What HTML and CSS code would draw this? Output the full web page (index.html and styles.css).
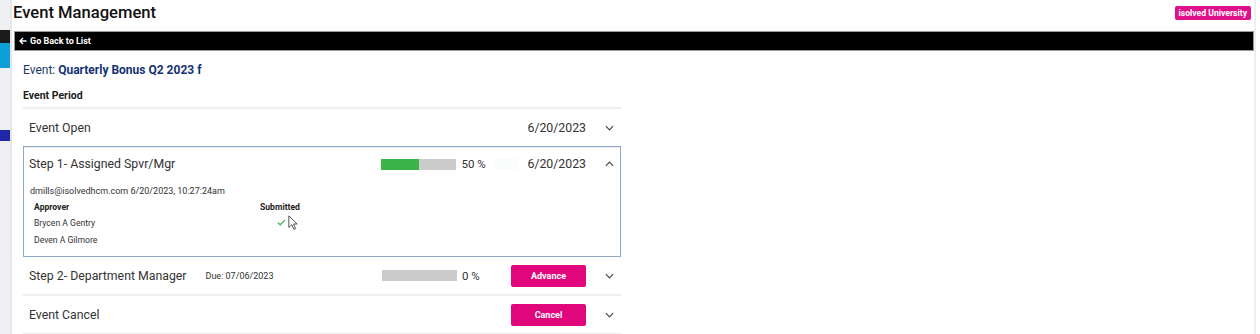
FILE: index.html
```html
<!DOCTYPE html>
<html>
<head>
    <title>Event Management</title>
    <link rel="stylesheet" href="styles.css">
</head>
<body>
    <div class="page">
        <div class="sidebar">
            <div class="band band-dark"></div>
            <div class="band band-cyan"></div>
            <div class="band band-blue"></div>
        </div>

        <div class="main">
            <div class="topbar">
                <h1>Event Management</h1>
                <span class="badge">isolved University</span>
            </div>

            <div class="backbar">
                <svg class="back-arrow" viewBox="0 0 8 8"><path d="M7.5 4H1.5M4 1L1 4l3 3"/></svg>
                <span class="back-link">Go Back to List</span>
            </div>

            <div class="content">
                <div class="event-name">Event: <b>Quarterly Bonus Q2 2023 f</b></div>
                <div class="section-title">Event Period</div>

                <div class="period-list">
                    <div class="period-row">
                        <span class="row-title">Event Open</span>
                        <span class="row-right">
                            <span class="row-date">6/20/2023</span>
                            <svg class="chev" viewBox="0 0 10 6"><path d="M1 1l4 4 4-4"/></svg>
                        </span>
                    </div>

                    <div class="period-box">
                        <div class="period-row head">
                            <span class="row-title">Step 1- Assigned Spvr/Mgr</span>
                            <span class="row-right">
                                <span class="progress"><span class="fill" style="width: 50%"></span></span>
                                <span class="pct short">50 %</span>
                                <span class="ghost"></span>
                                <span class="row-date">6/20/2023</span>
                                <svg class="chev" viewBox="0 0 10 6"><path d="M1 5l4-4 4 4"/></svg>
                            </span>
                        </div>
                        <div class="details">
                            <div class="stamp">dmills@isolvedhcm.com 6/20/2023, 10:27:24am</div>
                            <table class="approvers">
                                <tr><th>Approver</th><th>Submitted</th></tr>
                                <tr>
                                    <td>Brycen A Gentry</td>
                                    <td class="check-cell">
                                        <svg class="check" viewBox="0 0 10 8"><path d="M1 4.2l2.6 2.4L9 1"/></svg>
                                        <svg class="cursor" viewBox="0 0 12 18"><path d="M1 1v14l3.5-3.3 2.6 5.6 2.1-1-2.6-5.5H11z"/></svg>
                                    </td>
                                </tr>
                                <tr><td>Deven A Gilmore</td><td></td></tr>
                            </table>
                        </div>
                    </div>

                    <div class="period-row">
                        <span class="row-title">Step 2- Department Manager <span class="due">Due: 07/06/2023</span></span>
                        <span class="row-right">
                            <span class="progress"><span class="fill" style="width: 0%"></span></span>
                            <span class="pct">0 %</span>
                            <button class="action">Advance</button>
                            <svg class="chev" viewBox="0 0 10 6"><path d="M1 1l4 4 4-4"/></svg>
                        </span>
                    </div>

                    <div class="period-row">
                        <span class="row-title">Event Cancel</span>
                        <span class="row-right">
                            <button class="action">Cancel</button>
                            <svg class="chev" viewBox="0 0 10 6"><path d="M1 1l4 4 4-4"/></svg>
                        </span>
                    </div>
                </div>
            </div>
        </div>
    </div>
</body>
</html>
```

FILE: styles.css
```css
body {
    margin: 0;
    font-family: Roboto, 'Liberation Sans', sans-serif;
    background: #fff;
    color: #333;
    overflow: hidden;
}

.page {
    display: flex;
    height: 334px;
}

.sidebar {
    width: 10px;
    background: #eef0f2;
    border-right: 2px solid #e4e6e9;
    padding-top: 30px;
    flex-shrink: 0;
}

.band {
    width: 10px;
}

.band-dark {
    height: 13px;
    background: #1b1b1b;
}

.band-cyan {
    height: 25px;
    background: #0c9fd6;
}

.band-blue {
    height: 11px;
    margin-top: 62px;
    background: #1f26a8;
}

.main {
    flex: 1;
    border-right: 2px solid #eceef0;
    margin-right: 4px;
}

.topbar {
    display: flex;
    justify-content: space-between;
    align-items: flex-start;
    height: 31px;
    padding: 0 0 0 1px;
}

h1 {
    margin: 3px 0 0;
    font-size: 16.6px;
    font-weight: 500;
    color: #111;
}

.badge {
    margin: 6px 3px 0 0;
    background: #e0108a;
    color: #fff;
    font-size: 8.6px;
    font-weight: 700;
    padding: 1px 4px;
    border-radius: 2px;
    line-height: 12px;
}

.backbar {
    background: #000;
    border: 1px solid #9a9a9a;
    height: 18px;
    margin: 0 0 0 2px;
    display: flex;
    align-items: center;
    padding-left: 4px;
}

.back-arrow {
    width: 8px;
    height: 8px;
    margin-right: 3px;
    fill: none;
    stroke: #fff;
    stroke-width: 1.4;
}

.back-link {
    color: #fff;
    font-size: 9px;
    font-weight: 700;
}

.content {
    padding: 11px 0 0 11px;
    width: 598px;
}

.event-name {
    color: #1b3a6e;
    font-size: 12px;
    line-height: 16px;
}

.event-name b {
    font-weight: 700;
    color: #163272;
}

.section-title {
    font-size: 10.5px;
    font-weight: 700;
    color: #222;
    margin-top: 11px;
    padding-bottom: 5px;
    border-bottom: 2px solid #eceeef;
}

.period-row {
    display: flex;
    justify-content: space-between;
    align-items: center;
    height: 37px;
    padding: 0 6px;
    border-bottom: 2px solid #eceeef;
}

.row-title {
    font-size: 12.3px;
    color: #333;
    display: flex;
    align-items: center;
}

.due {
    font-size: 9px;
    margin-left: 19px;
}

.row-right {
    display: flex;
    align-items: center;
}

.row-date {
    font-size: 12.3px;
    color: #333;
}

.chev {
    width: 9px;
    height: 6px;
    margin: 0 1px 0 19px;
    fill: none;
    stroke: #444;
    stroke-width: 1.3;
}

.progress {
    width: 75px;
    height: 11px;
    background: #cbcbcb;
    display: flex;
}

.fill {
    background: #3bb54a;
    height: 100%;
}

.pct {
    font-size: 11.5px;
    width: 49px;
    margin-left: 5px;
    color: #333;
}

.pct.short {
    width: 33px;
}

.ghost {
    width: 24px;
    height: 12px;
    background: #fbfcfc;
    margin-right: 9px;
}

.period-box {
    border: 1px solid #8ea9c6;
    height: 109px;
    margin-top: -2px;
}

.period-box .period-row.head {
    border-bottom: none;
    height: 34px;
    padding: 0 5px;
}

.details {
    padding: 5px 6px 0;
}

.stamp {
    font-size: 9px;
    color: #333;
}

.approvers {
    border-collapse: collapse;
    margin-left: 4px;
    margin-top: 3px;
}

.approvers th {
    font-size: 8.6px;
    font-weight: 700;
    text-align: left;
    color: #222;
    height: 15px;
    padding: 0;
}

.approvers th:first-child,
.approvers td:first-child {
    width: 226px;
}

.approvers td {
    font-size: 8.6px;
    color: #333;
    height: 17px;
    padding: 0;
}

.check-cell {
    position: relative;
}

.check {
    width: 9px;
    height: 7px;
    margin-left: 17px;
    fill: none;
    stroke: #3bb54a;
    stroke-width: 1.4;
}

.cursor {
    position: absolute;
    left: 28px;
    top: 1px;
    width: 10px;
    height: 15px;
    fill: #fff;
    stroke: #333;
    stroke-width: 1;
}

.action {
    width: 75px;
    height: 22px;
    background: #e0077d;
    color: #fff;
    border: none;
    border-radius: 2px;
    font-family: Roboto, 'Liberation Sans', sans-serif;
    font-size: 9px;
    font-weight: 700;
    padding: 0;
}
```
